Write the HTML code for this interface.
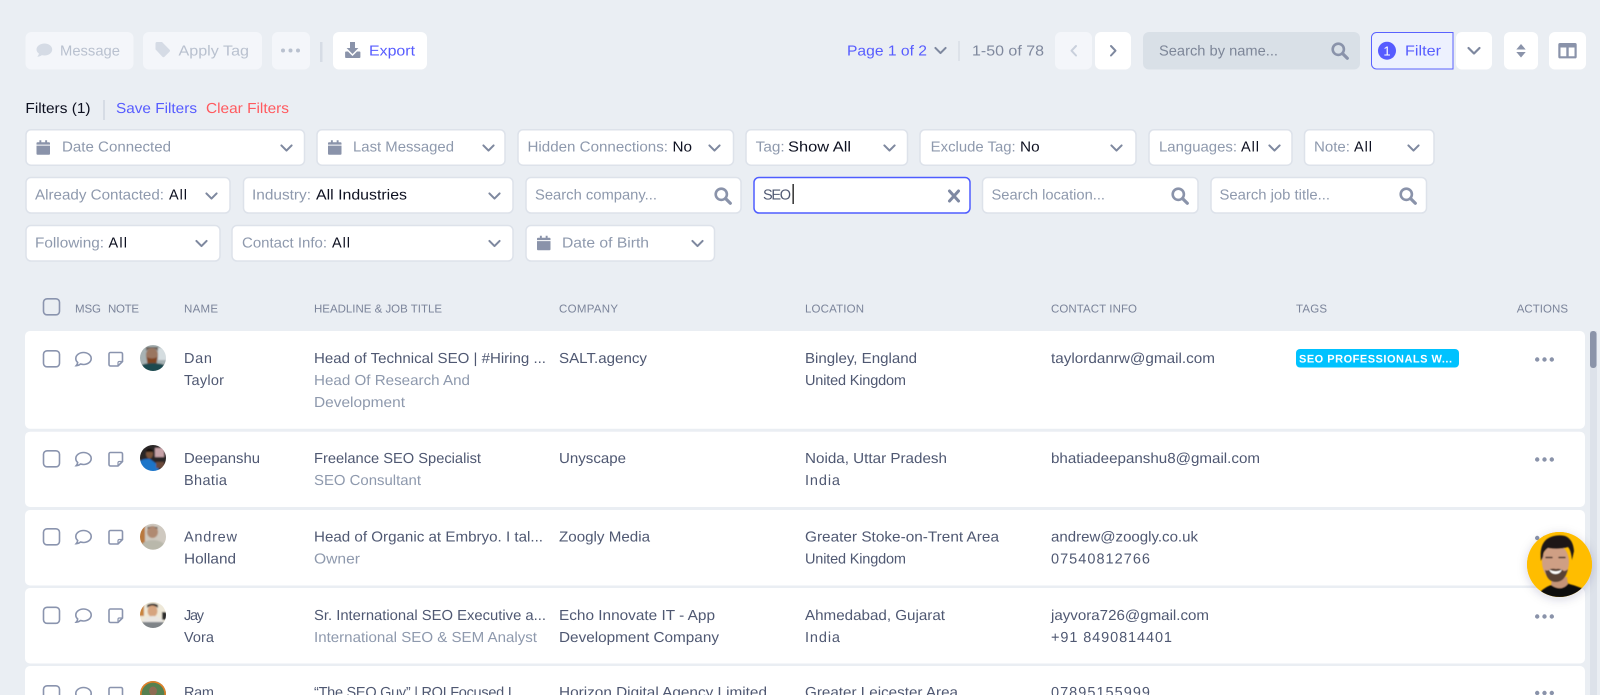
<!DOCTYPE html>
<html><head><meta charset="utf-8"><title>Connections</title>
<style>
html,body{margin:0;padding:0;width:1600px;height:695px;overflow:hidden;background:#eaeef3}
svg{display:block}
text{font-family:"Liberation Sans",sans-serif;font-size:14.5px;fill:#4f5872;text-rendering:geometricPrecision}
.b{fill:#fff}
.f{fill:#fff;stroke:#dde2ea;stroke-width:1.5}
.g{fill:#8b93a8}
.k{fill:#0d1020}
.s{fill:#8e99ad}
.p{fill:#575cff}
.h{font-size:11.5px;fill:#7b849a}
.dis{fill:#b9c1cf}
.ch{fill:none;stroke:#7e889f;stroke-width:2.2;stroke-linecap:round;stroke-linejoin:round}
.ol{fill:none;stroke:#8a94ae;stroke-width:1.6}
.ic{fill:#8a93aa}
</style></head><body>
<svg width="1600" height="695" viewBox="0 0 1600 695" xmlns="http://www.w3.org/2000/svg">
<defs>
<symbol id="chev" viewBox="0 0 14 9" overflow="visible"><path class="ch" d="M1.5 1.5 7 7l5.5-5.5"/></symbol>
<symbol id="cal" viewBox="0 0 14 15"><path class="ic" d="M0 5.5h14V14a1 1 0 0 1-1 1H1a1 1 0 0 1-1-1zM1 2h2V0h2v2h4V0h2v2h2a1 1 0 0 1 1 1v1.5H0V3a1 1 0 0 1 1-1z"/></symbol>
<symbol id="mag" viewBox="0 0 18 18"><circle cx="7.3" cy="7.3" r="5.6" fill="none" stroke="#8a93aa" stroke-width="2.6"/><path d="M11.5 11.5 16.3 16.3" stroke="#8a93aa" stroke-width="3.2" stroke-linecap="round"/></symbol>
<g id="cb"><rect x="43.5" y="0.8" width="16" height="16" rx="3.5" class="ol"/></g>
<g id="ms"><path class="ol" d="M83.5 1.5c4.2 0 7.7 2.6 7.7 6s-3.5 6-7.7 6c-1 0-2-.15-2.9-.45-1.3 1-3 1.6-4.4 1.6.8-.9 1.4-2 1.5-3.2-1.2-1-1.900-2.400-1.900-3.950 0-3.400 3.500-6 7.700-6z"/></g>
<g id="nt"><path class="ol" d="M110.500 1.500h10.500a1.500 1.500 0 0 1 1.500 1.500v7.500l-4.500 4.500h-7.500a1.500 1.500 0 0 1-1.500-1.500V3a1.500 1.500 0 0 1 1.500-1.500z"/><path d="M118 15v-3.200a1.300 1.300 0 0 1 1.300-1.300h3.200" fill="none" stroke="#8a94ae" stroke-width="1.200"/></g>
<g id="dots"><circle cx="-7.3" cy="0" r="2.2" fill="#8a93aa"/><circle cx="0" cy="0" r="2.2" fill="#8a93aa"/><circle cx="7.3" cy="0" r="2.2" fill="#8a93aa"/></g>
<clipPath id="c1"><circle cx="153" cy="358" r="13"/></clipPath>
<clipPath id="c2"><circle cx="153" cy="458" r="13"/></clipPath>
<clipPath id="c3"><circle cx="153" cy="536.7" r="13"/></clipPath>
<clipPath id="c4"><circle cx="153" cy="615" r="13"/></clipPath>
<clipPath id="c5"><circle cx="153" cy="694" r="13"/></clipPath>
<clipPath id="cb1"><circle cx="1559.5" cy="564.5" r="32.5"/></clipPath>
<filter id="sh" x="-30%" y="-30%" width="160%" height="160%"><feDropShadow dx="0" dy="2" stdDeviation="5" flood-color="#2a3350" flood-opacity=".18"/></filter>
<filter id="bl" x="-10%" y="-10%" width="120%" height="120%"><feGaussianBlur stdDeviation=".7"/></filter>
<filter id="bl2" x="-5%" y="-5%" width="110%" height="110%"><feGaussianBlur stdDeviation=".6"/></filter>
</defs>

<!-- toolbar -->
<rect x="25.5" y="32" width="108" height="37.5" rx="6" fill="#f4f6fa"/>
<rect x="143" y="32" width="119" height="37.5" rx="6" fill="#f4f6fa"/>
<rect x="272" y="32" width="38" height="37.5" rx="6" fill="#f4f6fa"/>
<rect x="320" y="42" width="2.5" height="20" fill="#d6dce5"/>
<rect x="333" y="32" width="94" height="37.5" rx="6" fill="#fff"/>
<path d="M44.5 43.5c4.3 0 7.7 2.6 7.7 6s-3.4 6-7.7 6c-.9 0-1.8-.1-2.6-.35-1.2.9-2.9 1.6-4.6 1.6.9-1 1.5-2.1 1.6-3.2-1.5-1-2.4-2.5-2.4-4.05 0-3.4 3.7-6 8-6z" fill="#d5dbe5"/>
<path d="M155.5 43.5a1.5 1.5 0 0 1 1.5-1.5h5l7.5 7.6a1.5 1.5 0 0 1 0 2.1l-5 5a1.5 1.5 0 0 1-2.1 0l-6.9-7.3z" fill="#d5dbe5"/>
<g fill="#b9c1cf"><circle cx="283" cy="50.500" r="2"/><circle cx="290.500" cy="50.500" r="2"/><circle cx="298" cy="50.500" r="2"/></g>
<path d="M350 42h5v6h3.400l-5.900 6-5.900-6h3.400zM345.500 51.500h2.500l4.500 4.500 4.500-4.500h2.500a.9.9 0 0 1 .9.900v4.700a.9.900 0 0 1-.9.900h-13.500a.9.900 0 0 1-.9-.9v-4.700a.9.900 0 0 1 .9-.9z" fill="#8a93aa"/>
<text x="60" y="55.500" textLength="60" lengthAdjust="spacingAndGlyphs" class="dis">Message</text>
<text x="178.500" y="55.500" textLength="70.500" lengthAdjust="spacingAndGlyphs" class="dis">Apply Tag</text>
<text x="369" y="55.500" textLength="46" lengthAdjust="spacingAndGlyphs" class="p">Export</text>

<text x="847" y="55.500" textLength="80" lengthAdjust="spacingAndGlyphs" class="p">Page 1 of 2</text>
<use href="#chev" x="934" y="46.500" width="13" height="8.500"/>
<rect x="958.500" y="41" width="1" height="20" fill="#d0d6df"/>
<text x="972" y="55.500" textLength="72" lengthAdjust="spacingAndGlyphs" style="fill:#7f889d">1-50 of 78</text>
<rect x="1055" y="32" width="37" height="37.500" rx="6" fill="#f4f6fa"/>
<path d="M1076 46 1071.500 50.700l4.500 4.800" fill="none" stroke="#c9d0dc" stroke-width="2" stroke-linecap="round" stroke-linejoin="round"/>
<rect x="1095" y="32" width="36" height="37.500" rx="6" fill="#fff"/>
<path d="M1111 46 1115.500 50.700l-4.500 4.800" fill="none" stroke="#7e889f" stroke-width="2" stroke-linecap="round" stroke-linejoin="round"/>
<rect x="1143" y="32" width="217" height="37.500" rx="6" fill="#d9e0e7"/>
<text x="1159" y="55.500" textLength="119" lengthAdjust="spacingAndGlyphs" style="fill:#7d8698">Search by name...</text>
<use href="#mag" x="1331" y="42" width="18" height="18"/>
<path d="M1453 32.500H1376.500a5 5 0 0 0-5 5V64a5 5 0 0 0 5 5H1453z" fill="#edf1fe" stroke="#5a62ff" stroke-width="1"/>
<circle cx="1387" cy="50.700" r="9" fill="#575cff"/>
<text x="1387" y="55.300" text-anchor="middle" style="fill:#fff;font-size:13px">1</text>
<text x="1405" y="55.500" textLength="36" lengthAdjust="spacingAndGlyphs" class="p">Filter</text>
<rect x="1456" y="32" width="36" height="37.500" rx="6" fill="#fff"/>
<use href="#chev" x="1467" y="46.500" width="14" height="9"/>
<rect x="1504" y="32" width="34" height="37.500" rx="6" fill="#fff"/>
<path d="M1521 44l4.700 5.500h-9.400zM1521 57.500l4.700-5.500h-9.400z" fill="#8a93aa"/>
<rect x="1549" y="32" width="37" height="37.500" rx="6" fill="#fff"/>
<path d="M1560 43h15a1.700 1.700 0 0 1 1.700 1.700v12a1.700 1.700 0 0 1-1.700 1.700h-15a1.700 1.700 0 0 1-1.700-1.700v-12a1.700 1.700 0 0 1 1.700-1.700zM1560.500 47.500v8.800h5.800v-8.800zM1568.700 47.500v8.800h5.800v-8.800z" fill="#8a93aa" fill-rule="evenodd"/>

<!-- filter header -->
<text x="25.400" y="113" textLength="65.200" lengthAdjust="spacingAndGlyphs" class="k">Filters (1)</text>
<rect x="103" y="100" width="2" height="20" fill="#d6dce5"/>
<text x="116" y="113" textLength="81" lengthAdjust="spacingAndGlyphs" class="p">Save Filters</text>
<text x="206" y="113" textLength="83" lengthAdjust="spacingAndGlyphs" style="fill:#ff5a5f">Clear Filters</text>

<!-- row 1 filters -->
<rect class="f" x="26" y="129.700" width="278.500" height="35.500" rx="5"/>
<use href="#cal" x="36.500" y="140" width="13.500" height="15"/>
<text x="62" y="151.500" textLength="109" lengthAdjust="spacingAndGlyphs" class="s">Date Connected</text>
<use href="#chev" x="280" y="144" width="13" height="8.500"/>
<rect class="f" x="317" y="129.700" width="188" height="35.500" rx="5"/>
<use href="#cal" x="328" y="140" width="13.500" height="15"/>
<text x="353" y="151.500" textLength="101" lengthAdjust="spacingAndGlyphs" class="s">Last Messaged</text>
<use href="#chev" x="482" y="144" width="13" height="8.500"/>
<rect class="f" x="518" y="129.700" width="215.500" height="35.500" rx="5"/>
<text x="527.500" y="151.500" textLength="140.500" lengthAdjust="spacingAndGlyphs" class="s">Hidden Connections:</text>
<text x="672.500" y="151.500" textLength="19.500" lengthAdjust="spacingAndGlyphs" class="k">No</text>
<use href="#chev" x="708" y="144" width="13" height="8.500"/>
<rect class="f" x="746" y="129.700" width="161.500" height="35.500" rx="5"/>
<text x="755.700" y="151.500" textLength="29" lengthAdjust="spacingAndGlyphs" class="s">Tag:</text>
<text x="788" y="151.500" textLength="63" lengthAdjust="spacingAndGlyphs" class="k">Show All</text>
<use href="#chev" x="883" y="144" width="13" height="8.500"/>
<rect class="f" x="920" y="129.700" width="216" height="35.500" rx="5"/>
<text x="930.700" y="151.500" textLength="85" lengthAdjust="spacingAndGlyphs" class="s">Exclude Tag:</text>
<text x="1020" y="151.500" textLength="19.600" lengthAdjust="spacingAndGlyphs" class="k">No</text>
<use href="#chev" x="1110" y="144" width="13" height="8.500"/>
<rect class="f" x="1149" y="129.700" width="143" height="35.500" rx="5"/>
<text x="1159" y="151.500" textLength="78" lengthAdjust="spacingAndGlyphs" class="s">Languages:</text>
<text x="1241" y="151.500" textLength="18" lengthAdjust="spacing" class="k">All</text>
<use href="#chev" x="1268" y="144" width="13" height="8.500"/>
<rect class="f" x="1304.500" y="129.700" width="129.500" height="35.500" rx="5"/>
<text x="1314" y="151.500" textLength="36" lengthAdjust="spacingAndGlyphs" class="s">Note:</text>
<text x="1354" y="151.500" textLength="18" lengthAdjust="spacing" class="k">All</text>
<use href="#chev" x="1407" y="144" width="13" height="8.500"/>

<!-- row 2 filters -->
<rect class="f" x="26" y="177.500" width="204" height="35.500" rx="5"/>
<text x="35" y="199.500" textLength="129" lengthAdjust="spacingAndGlyphs" class="s">Already Contacted:</text>
<text x="169" y="199.500" textLength="18" lengthAdjust="spacing" class="k">All</text>
<use href="#chev" x="205" y="192" width="13" height="8.500"/>
<rect class="f" x="243.500" y="177.500" width="269.500" height="35.500" rx="5"/>
<text x="252" y="199.500" textLength="59" lengthAdjust="spacingAndGlyphs" class="s">Industry:</text>
<text x="316" y="199.500" textLength="91" lengthAdjust="spacingAndGlyphs" class="k">All Industries</text>
<use href="#chev" x="488" y="192" width="13" height="8.500"/>
<rect class="f" x="526" y="177.500" width="215" height="35.500" rx="5"/>
<text x="535" y="199.500" textLength="122" lengthAdjust="spacingAndGlyphs" class="s">Search company...</text>
<use href="#mag" x="714" y="187" width="18" height="18"/>
<rect x="754" y="177.500" width="216" height="35.500" rx="5" fill="#fff" stroke="#4f5dff" stroke-width="1.500"/>
<text x="763" y="199.500" textLength="28" lengthAdjust="spacing" style="fill:#4f5872">SEO</text>
<rect x="792.500" y="184" width="1.300" height="20" fill="#111"/>
<path d="M949.500 191 958.500 201M958.500 191 949.500 201" stroke="#7f89a2" stroke-width="3" stroke-linecap="round"/>
<rect class="f" x="982.500" y="177.500" width="215.500" height="35.500" rx="5"/>
<text x="991.500" y="199.500" textLength="113.500" lengthAdjust="spacingAndGlyphs" class="s">Search location...</text>
<use href="#mag" x="1171" y="187" width="18" height="18"/>
<rect class="f" x="1211" y="177.500" width="215.500" height="35.500" rx="5"/>
<text x="1219.500" y="199.500" textLength="110.500" lengthAdjust="spacingAndGlyphs" class="s">Search job title...</text>
<use href="#mag" x="1399" y="187" width="18" height="18"/>

<!-- row 3 filters -->
<rect class="f" x="26" y="225.500" width="194" height="35.500" rx="5"/>
<text x="35" y="247.500" textLength="69" lengthAdjust="spacingAndGlyphs" class="s">Following:</text>
<text x="108.500" y="247.500" textLength="18.500" lengthAdjust="spacing" class="k">All</text>
<use href="#chev" x="195" y="239.500" width="13" height="8.500"/>
<rect class="f" x="232" y="225.500" width="281" height="35.500" rx="5"/>
<text x="242" y="247.500" textLength="85" lengthAdjust="spacingAndGlyphs" class="s">Contact Info:</text>
<text x="332" y="247.500" textLength="18" lengthAdjust="spacing" class="k">All</text>
<use href="#chev" x="488" y="239.500" width="13" height="8.500"/>
<rect class="f" x="526" y="225.500" width="188.500" height="35.500" rx="5"/>
<use href="#cal" x="537" y="235.500" width="13.500" height="15"/>
<text x="562" y="247.500" textLength="87" lengthAdjust="spacingAndGlyphs" class="s">Date of Birth</text>
<use href="#chev" x="691" y="239.500" width="13" height="8.500"/>

<!-- table header -->
<use href="#cb" x="0" y="298"/>
<text x="75" y="312.500" textLength="26" lengthAdjust="spacing" class="h">MSG</text>
<text x="108" y="312.500" textLength="31" lengthAdjust="spacing" class="h">NOTE</text>
<text x="184" y="312.500" textLength="34" lengthAdjust="spacing" class="h">NAME</text>
<text x="314" y="312.500" textLength="128" lengthAdjust="spacingAndGlyphs" class="h">HEADLINE &amp; JOB TITLE</text>
<text x="559" y="312.500" textLength="59" lengthAdjust="spacing" class="h">COMPANY</text>
<text x="805" y="312.500" textLength="59" lengthAdjust="spacing" class="h">LOCATION</text>
<text x="1051" y="312.500" textLength="86" lengthAdjust="spacing" class="h">CONTACT INFO</text>
<text x="1296" y="312.500" textLength="31" lengthAdjust="spacing" class="h">TAGS</text>
<text x="1516.700" y="312.500" textLength="51.300" lengthAdjust="spacing" class="h">ACTIONS</text>

<!-- rows -->
<rect x="25" y="331" width="1560" height="97.700" rx="5" fill="#fff"/>
<rect x="25" y="431.700" width="1560" height="75.300" rx="5" fill="#fff"/>
<rect x="25" y="510" width="1560" height="75.500" rx="5" fill="#fff"/>
<rect x="25" y="588" width="1560" height="75.500" rx="5" fill="#fff"/>
<rect x="25" y="666" width="1560" height="40" rx="5" fill="#fff"/>

<!-- scrollbar -->
<rect x="1590" y="331" width="7" height="364" fill="#dde2ea"/>
<rect x="1590" y="331" width="6.500" height="37" rx="3" fill="#8b94a9"/>

<!-- row icons -->
<use href="#cb" y="350"/><use href="#ms" y="351"/><use href="#nt" y="351"/>
<use href="#cb" y="450"/><use href="#ms" y="451"/><use href="#nt" y="451"/>
<use href="#cb" y="528"/><use href="#ms" y="529"/><use href="#nt" y="529"/>
<use href="#cb" y="606.500"/><use href="#ms" y="607.500"/><use href="#nt" y="607.500"/>
<use href="#cb" y="685"/><use href="#ms" y="686"/><use href="#nt" y="686"/>

<!-- avatars -->
<g clip-path="url(#c1)"><g filter="url(#bl)"><rect x="138" y="343" width="30" height="30" fill="#a7b2b4"/><rect x="158" y="348" width="10" height="12" fill="#d5dde0"/><ellipse cx="152" cy="355" rx="6" ry="7" fill="#9a7660"/><path d="M146 351q6-6 12 0v-4h-12z" fill="#6b6058"/><path d="M146.500 357q5.500 3 11 0l-1 7q-4.500 3-9 0z" fill="#7e4424"/><path d="M138 373v-7q8-3 15-3t15 3v7z" fill="#1d4a4f"/></g></g>
<g clip-path="url(#c2)"><g filter="url(#bl)"><rect x="138" y="443" width="30" height="30" fill="#2b2626"/><rect x="155" y="448" width="9" height="9" fill="#c7a3a8"/><ellipse cx="149.500" cy="454" rx="3.500" ry="4.500" fill="#7a5238"/><path d="M146 450q3.500-3 7 0v2h-7z" fill="#141010"/><path d="M138 473v-11q7-4 12-3l8 6 1 8z" fill="#1d74c9"/><rect x="156" y="462" width="8" height="6" fill="#6a4a3a"/></g></g>
<g clip-path="url(#c3)"><g filter="url(#bl)"><rect x="138" y="521.700" width="30" height="30" fill="#cfc9c0"/><rect x="138" y="521.700" width="7" height="30" fill="#b9783d"/><ellipse cx="152.500" cy="532" rx="5.500" ry="6" fill="#b08a72"/><path d="M147.500 529q5-4 10 0v-2h-10z" fill="#4f4640"/><path d="M142 552v-8q4-4 11-4t11 4v8z" fill="#b9b8ab"/></g></g>
<g clip-path="url(#c4)"><g filter="url(#bl)"><rect x="138" y="600" width="30" height="30" fill="#eee8d8"/><rect x="138" y="600" width="6" height="16" fill="#c8833a"/><rect x="162" y="612" width="6" height="8" fill="#2a2a2a"/><ellipse cx="152.500" cy="611" rx="5" ry="6" fill="#d6a47f"/><path d="M147 608q5-5 11 0v-3q-5-3-11 0z" fill="#161418"/><path d="M143 630v-10q4-4 10-4t10 4v10z" fill="#e9e6e2"/><rect x="138" y="622" width="30" height="8" fill="#7f8488"/></g></g>
<g clip-path="url(#c5)"><rect x="140" y="681" width="26" height="26" fill="#55804f"/><circle cx="153" cy="694" r="12.200" fill="none" stroke="#e57e25" stroke-width="1.600"/><ellipse cx="153" cy="691" rx="4" ry="4.500" fill="#8e6b52"/></g>

<!-- names -->
<text x="184" y="363" textLength="28" lengthAdjust="spacing">Dan</text>
<text x="184" y="385" textLength="40" lengthAdjust="spacing">Taylor</text>
<text x="184" y="463" textLength="76" lengthAdjust="spacingAndGlyphs">Deepanshu</text>
<text x="184" y="485" textLength="43" lengthAdjust="spacing">Bhatia</text>
<text x="184" y="541.500" textLength="53" lengthAdjust="spacing">Andrew</text>
<text x="184" y="563.500" textLength="52" lengthAdjust="spacingAndGlyphs">Holland</text>
<text x="184" y="620" textLength="20" lengthAdjust="spacing">Jay</text>
<text x="184" y="642" textLength="30" lengthAdjust="spacing">Vora</text>
<text x="184" y="697" textLength="30" lengthAdjust="spacing">Ram</text>

<!-- headline -->
<text x="314" y="363" textLength="232" lengthAdjust="spacingAndGlyphs">Head of Technical SEO | #Hiring ...</text>
<text x="314" y="385" textLength="156" lengthAdjust="spacingAndGlyphs" class="s">Head Of Research And</text>
<text x="314" y="407" textLength="91" lengthAdjust="spacingAndGlyphs" class="s">Development</text>
<text x="314" y="463" textLength="167" lengthAdjust="spacingAndGlyphs">Freelance SEO Specialist</text>
<text x="314" y="485" textLength="107" lengthAdjust="spacingAndGlyphs" class="s">SEO Consultant</text>
<text x="314" y="541.500" textLength="229" lengthAdjust="spacingAndGlyphs">Head of Organic at Embryo. I tal...</text>
<text x="314" y="563.500" textLength="46" lengthAdjust="spacingAndGlyphs" class="s">Owner</text>
<text x="314" y="620" textLength="232" lengthAdjust="spacingAndGlyphs">Sr. International SEO Executive a...</text>
<text x="314" y="642" textLength="223" lengthAdjust="spacingAndGlyphs" class="s">International SEO &amp; SEM Analyst</text>
<text x="314" y="697" textLength="209" lengthAdjust="spacing">“The SEO Guy” | ROI Focused I...</text>

<!-- company -->
<text x="559" y="363" textLength="88" lengthAdjust="spacingAndGlyphs">SALT.agency</text>
<text x="559" y="463" textLength="67" lengthAdjust="spacingAndGlyphs">Unyscape</text>
<text x="559" y="541.500" textLength="91" lengthAdjust="spacingAndGlyphs">Zoogly Media</text>
<text x="559" y="620" textLength="156" lengthAdjust="spacingAndGlyphs">Echo Innovate IT - App</text>
<text x="559" y="642" textLength="160" lengthAdjust="spacingAndGlyphs">Development Company</text>
<text x="559" y="697" textLength="208" lengthAdjust="spacingAndGlyphs">Horizon Digital Agency Limited</text>

<!-- location -->
<text x="805" y="363" textLength="112" lengthAdjust="spacingAndGlyphs">Bingley, England</text>
<text x="805" y="385" textLength="101" lengthAdjust="spacing">United Kingdom</text>
<text x="805" y="463" textLength="142" lengthAdjust="spacingAndGlyphs">Noida, Uttar Pradesh</text>
<text x="805" y="485" textLength="35" lengthAdjust="spacing">India</text>
<text x="805" y="541.500" textLength="194" lengthAdjust="spacingAndGlyphs">Greater Stoke-on-Trent Area</text>
<text x="805" y="563.500" textLength="101" lengthAdjust="spacing">United Kingdom</text>
<text x="805" y="620" textLength="140" lengthAdjust="spacingAndGlyphs">Ahmedabad, Gujarat</text>
<text x="805" y="642" textLength="35" lengthAdjust="spacing">India</text>
<text x="805" y="697" textLength="153" lengthAdjust="spacingAndGlyphs">Greater Leicester Area</text>

<!-- contact -->
<text x="1051" y="363" textLength="164" lengthAdjust="spacingAndGlyphs">taylordanrw@gmail.com</text>
<text x="1051" y="463" textLength="209" lengthAdjust="spacingAndGlyphs">bhatiadeepanshu8@gmail.com</text>
<text x="1051" y="541.500" textLength="147" lengthAdjust="spacingAndGlyphs">andrew@zoogly.co.uk</text>
<text x="1051" y="563.500" textLength="99" lengthAdjust="spacing">07540812766</text>
<text x="1051" y="620" textLength="158" lengthAdjust="spacingAndGlyphs">jayvora726@gmail.com</text>
<text x="1051" y="642" textLength="121" lengthAdjust="spacing">+91 8490814401</text>
<text x="1051" y="697" textLength="99" lengthAdjust="spacing">07895155999</text>

<!-- tag -->
<rect x="1296" y="349" width="163" height="18.500" rx="4" fill="#00c2ff"/>
<text x="1299" y="362.500" textLength="153" lengthAdjust="spacing" style="fill:#fff;font-size:11px;font-weight:bold">SEO PROFESSIONALS W...</text>

<!-- actions -->
<use href="#dots" x="1544.500" y="359.500"/>
<use href="#dots" x="1544.500" y="459.500"/>
<use href="#dots" x="1544.500" y="538"/>
<use href="#dots" x="1544.500" y="616.500"/>
<use href="#dots" x="1544.500" y="693"/>

<!-- chat bubble -->
<circle cx="1559.500" cy="564.500" r="32.500" fill="#ffbd00" filter="url(#sh)"/>
<g clip-path="url(#cb1)">
<rect x="1527" y="532" width="65" height="65" fill="#ffbd00"/>
<g filter="url(#bl2)">
<path d="M1537 597q4-9 17-13l3-3h9l3 3q13 3 20 9v5z" fill="#0b0a0b"/>
<path d="M1552 577h15l1 7q-7 8-17 1z" fill="#c59478"/>
<ellipse cx="1555.500" cy="562" rx="13.500" ry="18" fill="#cf9f84"/>
<path d="M1541 561q-2-16 6-22 8-5 18-3 8 3 9 15l-2 9q-1-10-4-13-9 3-20 1-5 3-5 9z" fill="#1b1616"/>
<path d="M1545 570q2 12 11 12t12-13q-2 2-4 2-4-3-8-2-5-1-7 1-2 1-4 0z" fill="#5a4236"/>
<path d="M1549 569.500q7 3.500 13 0-2 4.500-6.500 4.500t-6.500-4.500z" fill="#fff"/>
<path d="M1546 557.500h6M1559 557.500h6" stroke="#4a352c" stroke-width="1.500" stroke-linecap="round"/>
</g>
</g>
</svg>
</body></html>
